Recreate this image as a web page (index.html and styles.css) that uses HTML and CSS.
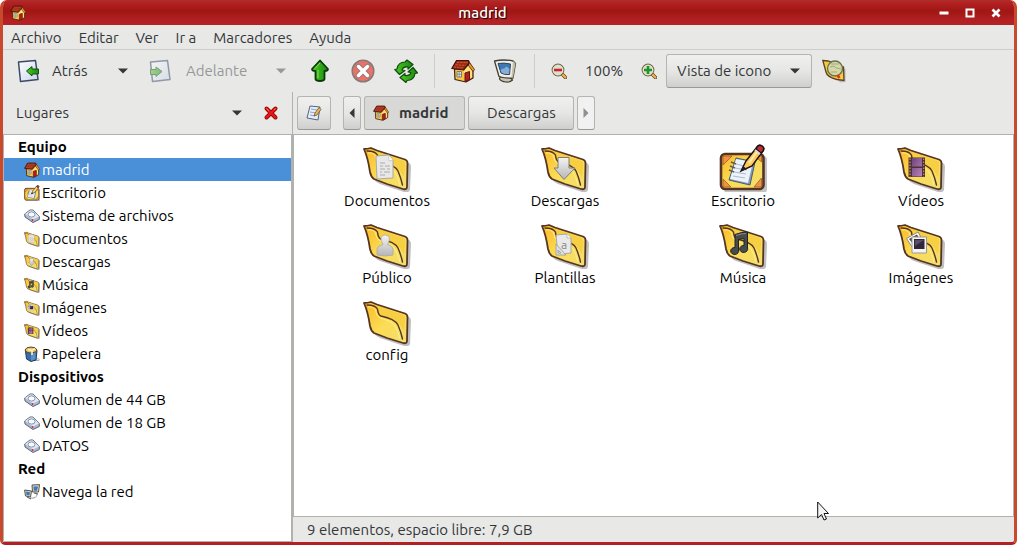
FILE: index.html
```
<!DOCTYPE html>
<html lang="es">
<head>
<meta charset="utf-8">
<title>madrid</title>
<link rel="stylesheet" href="styles.css">
</head>
<body>
<svg class="defs" aria-hidden="true">
  <defs>
    <linearGradient id="gold" x1="0" y1="0" x2="1" y2="1"><stop offset="0" stop-color="#fbb823"/><stop offset=".5" stop-color="#fbdc55"/><stop offset="1" stop-color="#f1df72"/></linearGradient>
    <linearGradient id="silver" x1="0" y1="0" x2="0" y2="1"><stop offset="0" stop-color="#f4f4f4"/><stop offset="1" stop-color="#b5b5b5"/></linearGradient>
    <linearGradient id="green" x1="0" y1="0" x2="1" y2="0"><stop offset="0" stop-color="#52c622"/><stop offset="1" stop-color="#178a13"/></linearGradient>
    <linearGradient id="paper" x1="0" y1="0" x2="1" y2="1"><stop offset="0" stop-color="#fff"/><stop offset="1" stop-color="#c8d5ea"/></linearGradient>
    <linearGradient id="film" x1="0" y1="0" x2="1" y2="1"><stop offset="0" stop-color="#6e4479"/><stop offset="1" stop-color="#b583bd"/></linearGradient>
  </defs>
  <symbol id="folder" viewBox="0 0 48 48">
    <path d="M5 7L46 19Q48 20 48 23L47 46Q46 49 41 48L17 40Q10 37 8 30Z" fill="#aaa" opacity=".75"/>
    <path d="M1 5Q4 5 8 4L14 6.500L42 15.500Q44.500 16.500 44.500 19L44 43Q44 46 40 45L24 40L11 35Q8 33 7 28Q5 14 1 5Z" fill="url(#gold)" stroke="#563422" stroke-width="1.800" stroke-linejoin="round"/>
    <path d="M11 7L41 17Q42.500 18 42 24L41 33Q36 23 27 20L17 16Q16 10 11 7Z" fill="#f6cf42"/>
    <path d="M4 7Q12 7 14.500 11Q15 17 18 18Q32 21 35 27Q38 34 39.500 41" fill="none" stroke="#563422" stroke-width="1.400" stroke-linecap="round"/>
    <path d="M5 9Q10 8 12.500 12Q13 18 17 20Q29 23 32 28Q35 33 37 41" fill="none" stroke="#fff08a" stroke-width="1"/>
  </symbol>
  <symbol id="doc" viewBox="0 0 48 48"><path d="M13 12L26 11L30 16L30 34L14 35Z" fill="#e8e8e8" stroke="#aaa"/><path d="M25.500 11.500L26 17L30 16" fill="#fff" stroke="#bbb" stroke-width=".7"/><path d="M17 19H22M17 22H20M22 22H27M17 25H22M24 25H27M17 28H19M21 28H27M17 31H22" stroke="#aaa" stroke-width="1.200"/></symbol>
  <symbol id="down" viewBox="0 0 48 48"><path d="M17 13.500H28V24H34L23 35.500L13 24H17Z" fill="url(#silver)" stroke="#7d7d7d"/></symbol>
  <symbol id="film-emblem" viewBox="0 0 48 48"><path d="M11.500 13.500H28V33H11.500Z" fill="#503133"/><path d="M15 14H25V22.500H15ZM15 24H25V32.500H15Z" fill="url(#film)"/><path d="M13 14.500V33M26.600 14.500V33" stroke="#af8a82" stroke-width="1.300" stroke-dasharray="1.500 1.500"/></symbol>
  <symbol id="person" viewBox="0 0 48 48"><path d="M14 34V28Q14 25 20 23.500Q17.500 19 18 17Q19 13.500 22.500 14Q26.500 14 26.500 18Q26 21 24.500 23.500Q30 25 30 28V34Q22 36 14 34Z" fill="url(#silver)" stroke="#aaa" stroke-width=".8"/></symbol>
  <symbol id="template" viewBox="0 0 48 48"><path d="M15 14L26 13L30 17L30 32L17 33Z" fill="#e9e9ea" stroke="#aaa"/><path d="M26 13V17H30" fill="#fff" stroke="#aaa" stroke-width=".7"/><path d="M15 23V34H25ZM17 29V32H20Z" fill="#dedee2" fill-rule="evenodd" stroke="#999" stroke-width=".8"/></symbol>
  <symbol id="note" viewBox="0 0 48 48"><path d="M16 13.500Q22 11 28.500 11V27A4 3.500 0 1 1 25 24.500V17.500L19.500 18.500V29A4 3.500 0 1 1 16 26.500Z" fill="#484b4c" stroke="#202223"/><path d="M17 14.500Q22 12.500 27 12.500" stroke="#888" fill="none"/></symbol>
  <symbol id="photo" viewBox="0 0 48 48"><path d="M9.500 17.500L21 11L28 23L17 29Z" fill="#fff" stroke="#888"/><path d="M12 18L20 13.500L23 19L16 23Z" fill="#4e444c"/><path d="M15 16H29.500V32H15Z" fill="#f4f4f4" stroke="#999"/><path d="M17 18H27.500V28H17Z" fill="#32273a"/><path d="M18 19H27L18 25Z" fill="#574b67"/></symbol>
  <symbol id="desktop" viewBox="0 0 48 48">
    <rect x="5" y="12" width="43" height="37" rx="4" fill="#aaa" opacity=".7"/>
    <rect x="2" y="10" width="42.500" height="35" rx="4" fill="url(#gold)" stroke="#563422" stroke-width="2.600"/>
    <path d="M4 12H13L4 21ZM4 35L12 43H4ZM42.500 34L35 43H42.500ZM36 12H42.500V18Z" fill="#f79043" stroke="#98602c" stroke-width=".8"/>
    <path d="M17 14L36 18L31 41L10 36Z" fill="#8499b8" stroke="#4a5a73"/><path d="M17 15L34 18L29 39L11 35Z" fill="#edf3fb"/>
    <path d="M17 20L25 22M16 24L28 26M15 28L27 30M14 32L26 34" stroke="#aebace" stroke-width="1.200"/>
    <path d="M12 18L17 20M11 22L16 24M10 26L15 28" stroke="#615c4e" stroke-width="1.400"/>
    <path d="M22 27L27 17L38 3Q40 0 43 2Q46 4 44 7L33 22Z" fill="#ffc95e" stroke="#171310" stroke-width="1.400"/>
    <path d="M30 19L40 5" stroke="#fff0a5" stroke-width="2"/><path d="M38 3Q40 0 43 2Q46 4 44 7L42 9L37 5Z" fill="#c22b38" stroke="#171310" stroke-width="1.400"/><path d="M36 6L41 10" stroke="#ddd" stroke-width="1.800"/><path d="M22 27L24 22L28 25Z" fill="#222"/>
  </symbol>
  <symbol id="house" viewBox="0 0 24 24">
    <path d="M3.500 10L12 10L18 3L22 11V19L15 23L4 20.500Z" fill="#f9c840" stroke="#3c1b12" stroke-width="1.200" stroke-linejoin="round"/>
    <path d="M13 12L17.500 6L21 11V18L14 21Z" fill="#ffe37a"/>
    <path d="M17.500 2L23.500 10.500L22 12.500L17 6Z" fill="#e89a2b" stroke="#5b2d14" stroke-width=".9" stroke-linejoin="round"/>
    <path d="M5.500 1.500L17.500 1.500L18 4.500L12.500 11L.8 9.500Z" fill="#9c2c17" stroke="#42120d" stroke-width="1.200" stroke-linejoin="round"/>
    <path d="M6 3.500H17M4.500 5.700L14.500 6.500M3 8L12.500 9" stroke="#d0582f" stroke-width="1" stroke-dasharray="2.200 1"/>
    <path d="M14 14L18.500 12.500V20.500L14 22.500Z" fill="#b51d20" stroke="#631411"/>
    <path d="M6 12.500H10.500V18H6Z" fill="#e7ecef" stroke="#787a78"/><path d="M8.200 13V18M6 15.200H10.500" stroke="#787a78" stroke-width=".8"/>
  </symbol>
  <symbol id="page" viewBox="0 0 24 24"><path d="M1.500 3L18.500 1.500L21 20.500L3.500 22.500Z" fill="url(#paper)" stroke="#3b4968" stroke-width="1.500" stroke-linejoin="round"/></symbol>
  <symbol id="back" viewBox="0 0 24 24"><use href="#page"/><path d="M9.500 12L15 7.500V10H21.500V15H15V17Z" fill="url(#green)" stroke="#124f12" stroke-linejoin="round"/></symbol>
  <symbol id="forward" viewBox="0 0 24 24"><use href="#page"/><path d="M13 12.500L7 8V10.500H1.500V15.500H7V17.500Z" fill="url(#green)" stroke="#124f12" stroke-linejoin="round"/></symbol>
  <symbol id="up" viewBox="0 0 24 24"><path d="M12 1.500L20 10Q20 12 16.500 12V20Q16 22 12 22Q8 22 7.500 20V12Q4 12 4 10Z" fill="url(#green)" stroke="#073c08" stroke-width="1.800" stroke-linejoin="round"/><path d="M12 4L7 9.500M10 11V19" stroke="#85e253"/></symbol>
  <symbol id="stop" viewBox="0 0 24 24"><circle cx="12" cy="12" r="10.800" fill="#ed7167" stroke="#817b79" stroke-width="1.500"/><path d="M7.500 7.500L16.500 16.500M16.500 7.500L7.500 16.500" stroke="#9f7772" stroke-width="5.500" stroke-linecap="round"/><path d="M7.500 7.500L16.500 16.500M16.500 7.500L7.500 16.500" stroke="#fff" stroke-width="3.500" stroke-linecap="round"/></symbol>
  <symbol id="reload" viewBox="0 0 24 24"><g fill="url(#green)" stroke="#0c4b0c" stroke-width="1.200" stroke-linejoin="round"><path d="M11 3L13 1L19 5.500L14 10V8Q9 7.500 8 11L11 11.500L5.500 15.500L.8 10.500L3 10Q4 3 11 3Z"/><path d="M13 21.500L12 23.500L6 18.500L11 14.500V16.500Q16 17 17 13.500L14 13L19 8.500L23.500 14L21 14.500Q20 21.500 13 21.500Z"/></g></symbol>
  <symbol id="computer" viewBox="0 0 24 24"><path d="M7 18L17 18L19.500 21Q17 23.500 13 23Q8 22.500 6.500 20Z" fill="#c9c5b2" stroke="#403e36" stroke-width="1.200"/><path d="M1.500 2Q11 0 20 2L22.500 4.500L20 19Q12 19.500 6 17.500Z" fill="#f1efe6" stroke="#403e36" stroke-width="1.300" stroke-linejoin="round"/><path d="M20 2L22.500 4.500L20 19L18.500 17.500Z" fill="#c4bfa8"/><path d="M5 4.500Q11 3.500 17.500 5L16.500 15.500Q11 16 8 14Z" fill="#3d78b7" stroke="#2a4363"/><path d="M7.500 11Q9 9 11.500 9.500Q13 6 16.500 10L16 15Q11 15.500 8.500 13.500Z" fill="#86aed5"/></symbol>
  <symbol id="lens" viewBox="0 0 16 16"><path d="M11 11L14.500 14.500" stroke="#584429" stroke-width="3.400" stroke-linecap="round"/><path d="M11.500 11.500L14.500 14.500" stroke="#ffb04c" stroke-width="2" stroke-linecap="round"/><circle cx="7" cy="7" r="5.800" fill="#d5e0dc" stroke="#6d6a55" stroke-width="1.200"/><circle cx="7" cy="7" r="4.900" fill="none" stroke="#f1e6a6" stroke-width=".8"/></symbol>
  <symbol id="zoom-out" viewBox="0 0 16 16"><use href="#lens"/><path d="M3 7H11" stroke="#d81e28" stroke-width="2.600"/></symbol>
  <symbol id="zoom-in" viewBox="0 0 16 16"><use href="#lens"/><path d="M3 7H11M7 3V11" stroke="#219429" stroke-width="2.600"/></symbol>
  <symbol id="find" viewBox="0 0 24 24"><path d="M4 4L23.500 10V23L18 23.500Z" fill="#aaa" opacity=".7"/><path d="M.8 1.500L6 2L21.500 8L22 21.500L15 20.500Q5 18 4 13Z" fill="#f4ca3d" stroke="#5d4323" stroke-width="1.300"/><circle cx="13" cy="9.500" r="7.500" fill="#d6d8a4" stroke="#68704c" stroke-width="1.300"/><path d="M8 8L12 7L14 9L19 10M9 5L17 5M9 13L15 13" stroke="#a1a98b" fill="none"/><path d="M15.500 16L17.500 19" stroke="#e73322" stroke-width="3"/><path d="M18 16L20 20" stroke="#f9d95a"/></symbol>
  <symbol id="edit" viewBox="0 0 16 16"><path d="M4 1L14 2L12 15L1 13Z" fill="#e4eefb" stroke="#53647e"/><path d="M5 4L11 5M4 7L10 8M4 10L9 11" stroke="#91a3bf"/><path d="M8 11L9 8L13 2.500L15 4.500L11 10Z" fill="#efb449" stroke="#5b4932" stroke-width=".7"/></symbol>
  <symbol id="close-x" viewBox="0 0 16 16"><path d="M3.500 3.500L12.500 12.500M12.500 3.500L3.500 12.500" stroke="#8c0909" stroke-width="4" stroke-linecap="round"/><path d="M3.500 3.500L12.500 12.500M12.500 3.500L3.500 12.500" stroke="#ef1616" stroke-width="2.400" stroke-linecap="round"/><path d="M3.500 3.500L6 6M11 5L12.500 3.500" stroke="#ff7770" stroke-width="1"/></symbol>
  <symbol id="caret" viewBox="0 0 10 6"><path d="M0 .5H10L5 5.500Z" fill="currentColor"/></symbol>
  <symbol id="disk" viewBox="0 0 16 16"><path d="M.7 6L6 2L9 2L15.300 8.500V11.500L9 14.500L1 9Z" fill="#adb9cf" stroke="#586680"/><path d="M1 6L6 2.500L9 2.500L15 8.500L9 11.500Z" fill="#e2e8f2"/><ellipse cx="7.500" cy="6.500" rx="3.500" ry="2.600" fill="#f8faff" stroke="#8493ae"/><circle cx="8.500" cy="12" r=".9" fill="#e32335"/></symbol>
  <symbol id="trash" viewBox="0 0 16 16"><path d="M12 13Q16 12 15 14.500H9" fill="none" stroke="#aaa"/><path d="M1.500 5L13 4.500L12 14L7 15.500L2.500 13Z" fill="#356eac" stroke="#203957"/><path d="M7 7V15L11.500 13V6Z" fill="#5b91c4"/><path d="M1 4Q2 1 7 1Q12 1 13 4Q13 6 8 7Q2 7 1 4Z" fill="#ecc35a" stroke="#594426"/><path d="M4 3.500L8 4.500L11 2.500M8 4V9" stroke="#fff5d6" stroke-width="1.500" fill="none"/></symbol>
  <symbol id="network" viewBox="0 0 16 16"><path d="M6 14Q13 15 13 10" fill="none" stroke="#999"/><path d="M8 1L15.500 .6L14.500 8L8.500 8ZM.6 6L7.500 7L6.500 13L1.500 12ZM3 13L7 15M10 9L14 10" fill="#d8d4c4" stroke="#55534c"/><path d="M9.500 2.500H14L13 6.800H9.800ZM2 7.500L6 8.200L5.400 11.500L2.500 11Z" fill="#3d78b7"/></symbol>
</svg>

<div class="window">
  <header class="titlebar">
    <svg class="icon16"><use href="#house"/></svg>
    <h1>madrid</h1>
    <div class="window-buttons">
      <button aria-label="Minimizar"><svg viewBox="0 0 10 10"><path d="M.5 5H9.500" stroke="#fff" stroke-width="3"/></svg></button>
      <button aria-label="Maximizar"><svg viewBox="0 0 10 10"><rect x="1.500" y="1.500" width="7" height="7" fill="none" stroke="#fff" stroke-width="2"/></svg></button>
      <button aria-label="Cerrar"><svg viewBox="0 0 10 10"><path d="M1.500 1.500L8.500 8.500M8.500 1.500L1.500 8.500" stroke="#fff" stroke-width="2.600"/></svg></button>
    </div>
  </header>

  <nav class="menubar">
    <button>Archivo</button><button>Editar</button><button>Ver</button><button>Ir a</button><button>Marcadores</button><button>Ayuda</button>
  </nav>

  <div class="toolbar">
    <div class="group history">
      <button class="labelled"><svg class="icon24"><use href="#back"/></svg>Atrás</button>
      <button class="drop" aria-label="Historial atrás"><svg class="caret"><use href="#caret"/></svg></button>
    </div>
    <div class="group history">
      <button class="labelled" disabled><svg class="icon24"><use href="#forward"/></svg>Adelante</button>
      <button class="drop" aria-label="Historial adelante" disabled><svg class="caret"><use href="#caret"/></svg></button>
    </div>
    <div class="group actions">
      <button aria-label="Subir"><svg class="icon24"><use href="#up"/></svg></button>
      <button aria-label="Detener"><svg class="icon24"><use href="#stop"/></svg></button>
      <button aria-label="Recargar"><svg class="icon24"><use href="#reload"/></svg></button>
    </div>
    <div class="group places">
      <button aria-label="Carpeta personal"><svg class="icon24"><use href="#house"/></svg></button>
      <button aria-label="Equipo"><svg class="icon24"><use href="#computer"/></svg></button>
    </div>
    <div class="group zoom">
      <button aria-label="Reducir"><svg class="icon16"><use href="#zoom-out"/></svg></button>
      <span>100%</span>
      <button aria-label="Ampliar"><svg class="icon16"><use href="#zoom-in"/></svg></button>
    </div>
    <div class="select-box">
      <select aria-label="Vista"><option>Vista de icono</option></select>
      <svg class="caret"><use href="#caret"/></svg>
    </div>
    <button aria-label="Buscar"><svg class="icon24"><use href="#find"/></svg></button>
  </div>

  <div class="content">
    <aside class="sidebar">
      <div class="side-head">
        <button class="side-title">Lugares <svg class="caret"><use href="#caret"/></svg></button>
        <button aria-label="Cerrar panel"><svg class="icon16"><use href="#close-x"/></svg></button>
      </div>
      <div class="places-list">
        <h2>Equipo</h2>
        <ul>
          <li><a class="selected" href="#"><svg class="icon16"><use href="#house"/></svg>madrid</a></li>
          <li><a href="#"><svg class="icon16"><use href="#desktop"/></svg>Escritorio</a></li>
          <li><a href="#"><svg class="icon16"><use href="#disk"/></svg>Sistema de archivos</a></li>
          <li><a href="#"><svg class="icon16"><use href="#folder"/><use href="#doc"/></svg>Documentos</a></li>
          <li><a href="#"><svg class="icon16"><use href="#folder"/><use href="#down"/></svg>Descargas</a></li>
          <li><a href="#"><svg class="icon16"><use href="#folder"/><use href="#note"/></svg>Música</a></li>
          <li><a href="#"><svg class="icon16"><use href="#folder"/><use href="#photo"/></svg>Imágenes</a></li>
          <li><a href="#"><svg class="icon16"><use href="#folder"/><use href="#film-emblem"/></svg>Vídeos</a></li>
          <li><a href="#"><svg class="icon16"><use href="#trash"/></svg>Papelera</a></li>
        </ul>
        <h2>Dispositivos</h2>
        <ul>
          <li><a href="#"><svg class="icon16"><use href="#disk"/></svg>Volumen de 44 GB</a></li>
          <li><a href="#"><svg class="icon16"><use href="#disk"/></svg>Volumen de 18 GB</a></li>
          <li><a href="#"><svg class="icon16"><use href="#disk"/></svg>DATOS</a></li>
        </ul>
        <h2>Red</h2>
        <ul>
          <li><a href="#"><svg class="icon16"><use href="#network"/></svg>Navega la red</a></li>
        </ul>
      </div>
    </aside>

    <main class="browser">
      <nav class="pathbar">
        <button class="raised edit" aria-label="Editar ruta"><svg class="icon16"><use href="#edit"/></svg></button>
        <button class="raised step" aria-label="Anterior"><svg viewBox="0 0 6 10"><path d="M5.500 0V10L.5 5Z" fill="currentColor"/></svg></button>
        <button class="raised current"><svg class="icon16"><use href="#house"/></svg>madrid</button>
        <button class="raised crumb">Descargas</button>
        <button class="raised step" aria-label="Siguiente" disabled><svg viewBox="0 0 6 10"><path d="M.5 0V10L5.500 5Z" fill="currentColor"/></svg></button>
      </nav>
      <div class="files">
        <a href="#"><svg class="icon48"><use href="#folder"/><use href="#doc"/></svg>Documentos</a>
        <a href="#"><svg class="icon48"><use href="#folder"/><use href="#down"/></svg>Descargas</a>
        <a href="#"><svg class="icon48"><use href="#desktop"/></svg>Escritorio</a>
        <a href="#"><svg class="icon48"><use href="#folder"/><use href="#film-emblem"/></svg>Vídeos</a>
        <a href="#"><svg class="icon48"><use href="#folder"/><use href="#person"/></svg>Público</a>
        <a href="#"><svg class="icon48"><use href="#folder"/><use href="#template"/><text class="glyph" x="20" y="28">a</text></svg>Plantillas</a>
        <a href="#"><svg class="icon48"><use href="#folder"/><use href="#note"/></svg>Música</a>
        <a href="#"><svg class="icon48"><use href="#folder"/><use href="#photo"/></svg>Imágenes</a>
        <a href="#"><svg class="icon48"><use href="#folder"/></svg>config</a>
      </div>
      <footer class="status">9 elementos, espacio libre: 7,9 GB</footer>
    </main>
  </div>
</div>
<svg class="pointer" viewBox="0 0 12 20" aria-hidden="true"><path d="M.7 1V17L4.500 13.500L7 19L9.500 18L7 12.500H11.500Z" fill="#f4f4f4" stroke="#111"/></svg>
</body>
</html>
```

FILE: styles.css
```
* { box-sizing: border-box; }
html, body { height: 100%; margin: 0; }
body {
  background: #fff;
  color: #33373a;
  font: 15px/18px Ubuntu, "Noto Sans", sans-serif;
  font-variant-ligatures: none;
}
button, select { font: inherit; color: inherit; }
button { display: flex; align-items: center; padding: 0; border: 0; background: none; }
a { color: inherit; text-decoration: none; }
svg { display: block; flex: none; overflow: visible; }
.defs { position: absolute; width: 0; height: 0; }
.icon16 { width: 16px; height: 16px; }
.icon24 { width: 24px; height: 24px; }
.icon48 { width: 48px; height: 48px; }
.caret { width: 10px; height: 6px; }
.glyph { font: 12px Ubuntu, "Noto Sans", sans-serif; fill: #888; }

.window {
  display: flex;
  flex-direction: column;
  min-height: 100%;
  overflow: hidden;
  border: solid #c8492b;
  border-width: 0 3px 3px;
  border-bottom-color: #b32024;
  border-radius: 7px 7px 5px 5px;
  background: #e8e8e6;
}

.titlebar {
  display: flex;
  align-items: center;
  justify-content: space-between;
  height: 25px;
  margin: 0 -3px;
  padding: 0 16px 0 10px;
  background: linear-gradient(#ad3026 0, #b32024 3px, #a01713 11px, #a41a18 14px, #b32024 20px, #b32225);
}
.titlebar h1 {
  margin: 0;
  color: #fff;
  font-size: 15px;
  font-weight: 500;
  text-shadow: 1px 1px 1px #000;
}
.window-buttons { display: flex; justify-content: flex-end; gap: 16px; }
.window-buttons svg { width: 10px; height: 10px; }

.menubar {
  display: flex;
  gap: 17px;
  height: 25px;
  padding: 1px 8px 0;
  border-bottom: 1px solid #cdcdca;
}

.toolbar { display: flex; align-items: center; height: 42px; padding: 0 14px; }
.toolbar .group { display: flex; align-items: center; height: 34px; }
.toolbar :disabled { color: #96989a; }
.toolbar :disabled .icon24 { opacity: .5; }
.labelled { gap: 11px; }
.history { justify-content: space-between; width: 111px; margin-right: 21px; }
.history + .history { width: 137px; margin-right: 22px; }
.history + .history .labelled { gap: 13px; }
.actions { gap: 19px; padding-right: 16px; border-right: 1px solid #cdcdca; }
.places { gap: 18px; padding: 0 17px 0 16px; border-right: 1px solid #cdcdca; }
.zoom { gap: 18px; padding: 0 9px 0 16px; }
.select-box { position: relative; width: 146px; margin-right: 10px; }
.select-box select { appearance: none; width: 100%; height: 34px; padding: 0 32px 0 10px; }
.select-box .caret { position: absolute; top: 14px; right: 12px; pointer-events: none; }

.raised, .select-box select {
  border: 1px solid #b4b4b0;
  border-bottom-color: #999996;
  border-radius: 3px;
  background: linear-gradient(#f0f0ef, #e6e6e4 50%, #cfcfcd);
}

.content { display: flex; flex: 1; }
.sidebar {
  display: flex;
  flex-direction: column;
  flex: none;
  width: 290px;
  border-right: 1px solid #b2b2ac;
}
.side-head { display: flex; align-items: center; gap: 21px; height: 42px; padding: 0 13px; }
.side-title { flex: 1; justify-content: space-between; }
.places-list {
  flex: 1;
  border: 1px solid #b2b2ac;
  background: #fff;
  color: #000;
}
.places-list h2 { margin: 0; padding-left: 14px; font-size: 15px; line-height: 23px; }
.places-list ul { margin: 0; padding: 0; list-style: none; }
.places-list a { display: flex; align-items: center; gap: 2px; height: 23px; padding-left: 20px; }
.places-list .selected { background: #4a90d9; color: #fff; }

.browser { display: flex; flex: 1; flex-direction: column; min-width: 0; }
.pathbar { display: flex; align-items: center; gap: 3px; height: 42px; padding: 0 4px; }
.raised { justify-content: center; height: 34px; }
.edit { width: 34px; margin-right: 9px; }
.step { width: 18px; }
.step svg { width: 6px; height: 10px; }
.step:disabled { color: #8d8f90; background: #f1f1f1; }
.current { justify-content: flex-start; gap: 10px; min-width: 101px; padding: 0 16px 0 8px; background: #d8d8d6; font-weight: 700; }
.crumb { min-width: 106px; }
.files {
  display: grid;
  grid-template-columns: repeat(auto-fill, minmax(160px, 1fr));
  flex: 1;
  align-content: start;
  padding: 9px 3px 9px 4px;
  border: 1px solid #b2b2ac;
  background: #fff;
  color: #000;
}
.files a { display: flex; flex-direction: column; align-items: center; height: 77px; }
.status { padding: 4px 14px; line-height: 17px; }

.pointer { position: absolute; left: 817px; top: 501px; width: 12px; height: 20px; }
```
